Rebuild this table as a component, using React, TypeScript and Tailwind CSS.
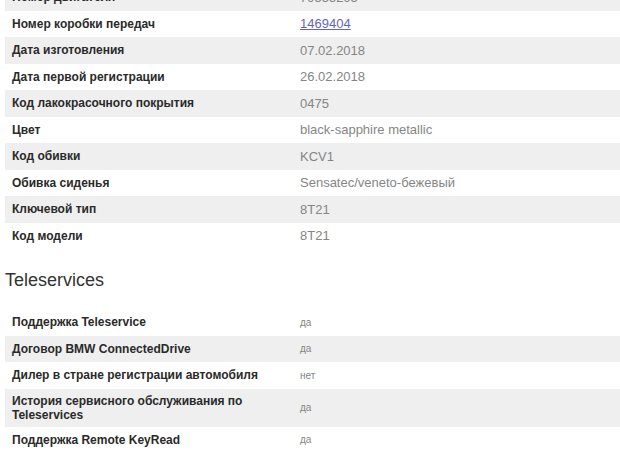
import React from 'react';

type Row = { label: string; value: React.ReactNode; tall?: boolean };

const carRows: Row[] = [
  { label: 'Номер двигателя', value: '79555295' },
  { label: 'Номер коробки передач', value: <a href="#" className="text-[#6464c0] underline">1469404</a> },
  { label: 'Дата изготовления', value: '07.02.2018' },
  { label: 'Дата первой регистрации', value: '26.02.2018' },
  { label: 'Код лакокрасочного покрытия', value: '0475' },
  { label: 'Цвет', value: 'black-sapphire metallic' },
  { label: 'Код обивки', value: 'KCV1' },
  { label: 'Обивка сиденья', value: 'Sensatec/veneto-бежевый' },
  { label: 'Ключевой тип', value: '8T21' },
  { label: 'Код модели', value: '8T21' },
];

const teleRows: Row[] = [
  { label: 'Поддержка Teleservice', value: 'да' },
  { label: 'Договор BMW ConnectedDrive', value: 'да' },
  { label: 'Дилер в стране регистрации автомобиля', value: 'нет' },
  { label: 'История сервисного обслуживания по Teleservices', value: 'да', tall: true },
  { label: 'Поддержка Remote KeyRead', value: 'да' },
];

const Table: React.FC<{ rows: Row[]; small?: boolean; startGray: boolean }> = ({ rows, small, startGray }) => (
  <div className="ml-[5px]">
    {rows.map((r, i) => {
      const gray = (i % 2 === 0) === startGray;
      return (
        <div
          key={r.label}
          className={`flex items-center ${r.tall ? 'h-[38px]' : 'h-[26.5px]'} ${gray ? 'bg-[#efefef]' : 'bg-white'}`}
        >
          <div className="w-[295px] shrink-0 pl-[7px] pr-[40px] text-[12px] leading-[14px] font-bold text-[#2a2a2a]">
            {r.label}
          </div>
          <div className={`${small ? 'text-[10px]' : 'text-[13px]'} text-[#858585]`}>{r.value}</div>
        </div>
      );
    })}
  </div>
);

export default function App() {
  return (
    <div className="w-[620px] h-[460px] overflow-hidden bg-white font-['Liberation_Sans',Arial,sans-serif]">
      <div className="-mt-[16px]">
        <Table rows={carRows} startGray />
      </div>
      <h2 className="ml-[5px] mt-[20px] text-[18px] leading-[22px] text-[#333]">Teleservices</h2>
      <div className="mt-[18px]">
        <Table rows={teleRows} small startGray={false} />
      </div>
    </div>
  );
}
